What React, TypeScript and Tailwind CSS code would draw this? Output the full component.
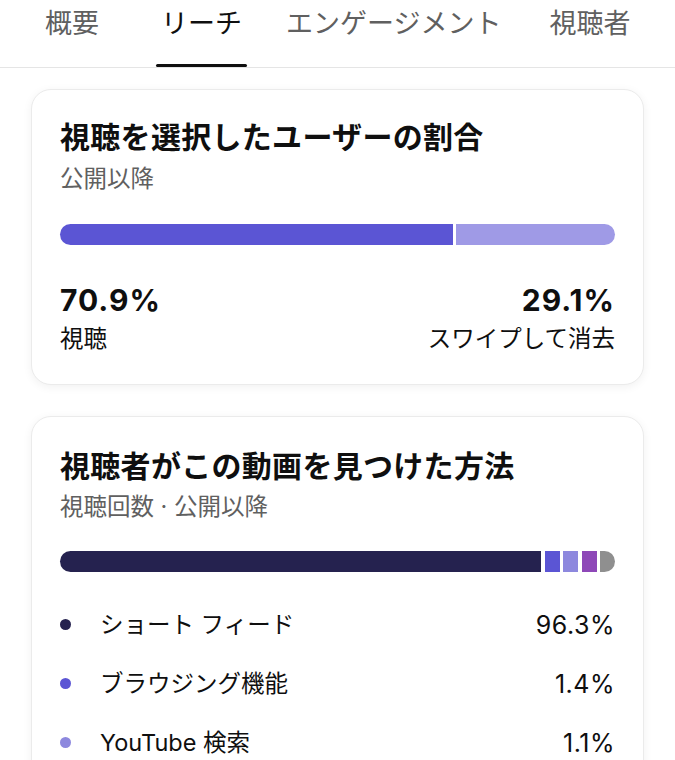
const tabs = [
  { label: "概要", ml: "ml-[45px]" },
  { label: "リーチ", ml: "ml-[62px]", active: true },
  { label: "エンゲージメント", ml: "ml-[44px]" },
  { label: "視聴者", ml: "ml-[48px]" },
]

const sources = [
  { label: "ショート フィード", value: "96.3%", dot: "bg-[#25224f]" },
  { label: "ブラウジング機能", value: "1.4%", dot: "bg-[#5b55d4]" },
  { label: "YouTube 検索", value: "1.1%", dot: "bg-[#8d88de]" },
]

function Card({ children, className = "" }: { children: React.ReactNode; className?: string }) {
  return (
    <div
      className={`mx-[31px] rounded-[20px] border border-[#ebebeb] bg-white px-[28px] shadow-[0_2px_10px_rgba(0,0,0,0.06)] ${className}`}
    >
      {children}
    </div>
  )
}

export default function App() {
  return (
    <div
      className="min-h-screen w-[675px] overflow-hidden bg-white text-[#0f0f0f]"
      style={{ fontFamily: 'Inter, "Noto Sans CJK JP", sans-serif' }}
    >
      {/* tabs */}
      <div className="flex h-[68px] border-b border-[#e5e5e5]">
        {tabs.map((t) => (
          <div key={t.label} className={`relative flex flex-col pt-[6px] ${t.ml}`}>
            <span
              className={`whitespace-nowrap text-[27px] leading-[36px] ${
                t.active ? "text-[#0f0f0f]" : "text-[#606060]"
              }`}
            >
              {t.label}
            </span>
            {t.active && (
              <div className="absolute -left-[5px] -right-[5px] bottom-0 h-[3px] rounded-full bg-[#0f0f0f]" />
            )}
          </div>
        ))}
      </div>

      {/* card 1 */}
      <Card className="mt-[21px] pt-[29px] pb-[30px]">
        <h2 className="text-[30px] font-bold leading-[36px] tracking-[0.3px]">視聴を選択したユーザーの割合</h2>
        <p className="mt-[9px] text-[23.5px] leading-[30px] text-[#606060]">公開以降</p>
        <div className="mt-[30px] flex h-[21px] gap-[3px]">
          <div className="h-full w-[70.9%] rounded-l-full bg-[#5b55d4]" />
          <div className="h-full flex-1 rounded-r-full bg-[#9f9ae6]" />
        </div>
        <div className="mt-[37px] flex justify-between">
          <div>
            <div className="text-[30px] font-bold leading-[36px] tracking-[1px]">70.9%</div>
            <div className="mt-[6px] text-[23.5px] leading-[30px]">視聴</div>
          </div>
          <div className="text-right">
            <div className="text-[30px] font-bold leading-[36px] tracking-[1px]">29.1%</div>
            <div className="mt-[6px] text-[23.5px] leading-[30px]">スワイプして消去</div>
          </div>
        </div>
      </Card>

      {/* card 2 */}
      <Card className="mt-[31px] pt-[31px] pb-[40px]">
        <h2 className="text-[30px] font-bold leading-[36px] tracking-[0.3px]">視聴者がこの動画を見つけた方法</h2>
        <p className="mt-[8px] text-[23.5px] leading-[30px] text-[#606060]">視聴回数 · 公開以降</p>
        <div className="mt-[29px] flex h-[21px] gap-[3.5px]">
          <div className="h-full flex-1 rounded-l-full bg-[#25224f]" />
          <div className="h-full w-[15px] bg-[#5b55d4]" />
          <div className="h-full w-[15px] bg-[#8d88de]" />
          <div className="h-full w-[15px] bg-[#8e48b8]" />
          <div className="h-full w-[15px] rounded-r-full bg-[#8f8f8f]" />
        </div>
        <div className="mt-[23px]">
          {sources.map((s) => (
            <div key={s.label} className="flex h-[59px] items-center">
              <span className={`h-[11px] w-[11px] rounded-full ${s.dot}`} />
              <span className="ml-[29px] flex-1 text-[23.5px] leading-[30px]">{s.label}</span>
              <span className="text-[25px] leading-[30px] tracking-[0.5px]">{s.value}</span>
            </div>
          ))}
        </div>
      </Card>
    </div>
  )
}
